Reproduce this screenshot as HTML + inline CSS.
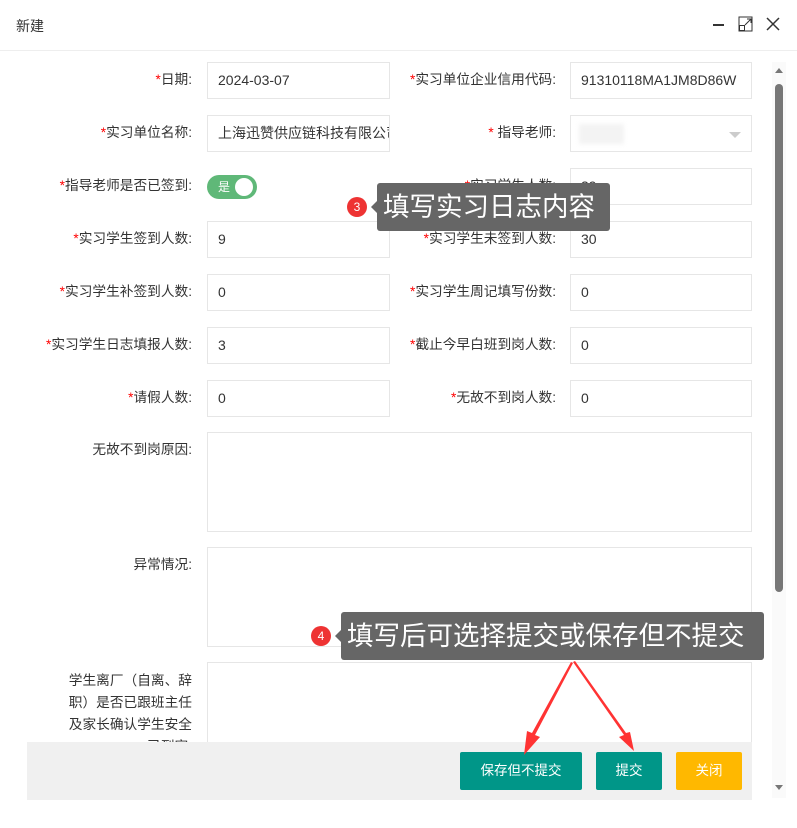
<!DOCTYPE html>
<html><head><meta charset="utf-8"><style>
*{box-sizing:border-box;margin:0;padding:0}
body{width:797px;height:828px;background:#fff;font-family:"Liberation Sans","Noto Sans CJK SC",sans-serif;font-size:13px;color:#333;position:relative;overflow:hidden}
.a{position:absolute}
.lab{position:absolute;text-align:right;line-height:36px;color:#333;font-size:13.7px;white-space:nowrap}
.lab i{color:#f00;font-style:normal}
.in{position:absolute;border:1px solid #e6e6e6;height:37px;line-height:35px;padding-left:10px;font-size:14px;color:#333;overflow:hidden;white-space:nowrap;background:#fff}
.btn{position:absolute;top:752px;height:38px;line-height:38px;color:#fff;text-align:center;border-radius:2px;font-size:13.5px}
.tip{position:absolute;background:#666;color:#fff;font-size:26.5px;border-radius:3px;padding-left:6px;white-space:nowrap;overflow:hidden}
.bd{position:absolute;width:20px;height:20px;border-radius:50%;background:#e33;color:#fff;font-size:12px;text-align:center;line-height:20px}
</style></head><body>
<div class="a" style="left:16px;top:16px;font-size:14px">新建</div>
<div class="a" style="left:713px;top:24px;width:11px;height:2px;background:#333"></div>
<svg class="a" style="left:738px;top:16px" width="16" height="16"><rect x="1" y="1" width="13" height="14" fill="none" stroke="#333"/><path d="M7 9 L13 3 M9 3 H13 V7" stroke="#333" fill="none"/><rect x="1.5" y="9.5" width="5" height="5" fill="#fff" stroke="#333"/></svg>
<svg class="a" style="left:766px;top:17px" width="14" height="14"><path d="M1 1 L13 13 M13 1 L1 13" stroke="#333" stroke-width="1.5"/></svg>
<div class="a" style="left:0;top:50px;width:797px;height:1px;background:#eee"></div>

<div class="lab" style="right:605px;top:62px"><i>*</i>日期:</div>
<div class="in" style="left:207px;width:183px;top:62px">2024-03-07</div>
<div class="lab" style="right:241px;top:62px"><i>*</i>实习单位企业信用代码:</div>
<div class="in" style="left:570px;width:182px;top:62px">91310118MA1JM8D86W</div>

<div class="lab" style="right:605px;top:115px"><i>*</i>实习单位名称:</div>
<div class="in" style="left:207px;width:183px;top:115px">上海迅赞供应链科技有限公司</div>
<div class="lab" style="right:241px;top:115px"><i>*</i> 指导老师:</div>
<div class="in" style="left:570px;width:182px;top:115px"><span class="a" style="left:8px;top:8px;width:45px;height:20px;background:#f3f3f3;filter:blur(2px)"></span><span class="a" style="right:10px;top:16px;border:6px solid transparent;border-top-color:#ccc;border-bottom:0"></span></div>

<div class="lab" style="right:605px;top:168px"><i>*</i>指导老师是否已签到:</div>
<div class="a" style="left:207px;top:175px;width:50px;height:24px;border-radius:12px;background:#5fb878;color:#fff;font-size:12px;line-height:24px;padding-left:11px">是<span class="a" style="right:4px;top:3px;width:18px;height:18px;border-radius:50%;background:#fff"></span></div>
<div class="lab" style="right:241px;top:168px"><i>*</i>实习学生人数:</div>
<div class="in" style="left:570px;width:182px;top:168px">39</div>

<div class="lab" style="right:605px;top:221px"><i>*</i>实习学生签到人数:</div>
<div class="in" style="left:207px;width:183px;top:221px">9</div>
<div class="lab" style="right:241px;top:221px"><i>*</i>实习学生未签到人数:</div>
<div class="in" style="left:570px;width:182px;top:221px">30</div>

<div class="lab" style="right:605px;top:274px"><i>*</i>实习学生补签到人数:</div>
<div class="in" style="left:207px;width:183px;top:274px">0</div>
<div class="lab" style="right:241px;top:274px"><i>*</i>实习学生周记填写份数:</div>
<div class="in" style="left:570px;width:182px;top:274px">0</div>

<div class="lab" style="right:605px;top:327px"><i>*</i>实习学生日志填报人数:</div>
<div class="in" style="left:207px;width:183px;top:327px">3</div>
<div class="lab" style="right:241px;top:327px"><i>*</i>截止今早白班到岗人数:</div>
<div class="in" style="left:570px;width:182px;top:327px">0</div>

<div class="lab" style="right:605px;top:380px"><i>*</i>请假人数:</div>
<div class="in" style="left:207px;width:183px;top:380px">0</div>
<div class="lab" style="right:241px;top:380px"><i>*</i>无故不到岗人数:</div>
<div class="in" style="left:570px;width:182px;top:380px">0</div>

<div class="lab" style="right:605px;top:432px">无故不到岗原因:</div>
<div class="in" style="left:207px;width:545px;top:432px;height:100px"></div>
<div class="lab" style="right:605px;top:547px">异常情况:</div>
<div class="in" style="left:207px;width:545px;top:547px;height:100px"></div>
<div class="a" style="left:58px;width:134px;top:670px;text-align:right;line-height:22px;font-size:13.7px">学生离厂（自离、辞职）是否已跟班主任及家长确认学生安全已到家:</div>
<div class="in" style="left:207px;width:545px;top:662px;height:100px"></div>

<div class="a" style="left:27px;top:742px;width:725px;height:58px;background:#f0f0f0"></div>
<div class="a" style="left:0;top:800px;width:797px;height:28px;background:#fff"></div>
<div class="btn" style="left:460px;width:122px;background:#009688">保存但不提交</div>
<div class="btn" style="left:596px;width:66px;background:#009688">提交</div>
<div class="btn" style="left:676px;width:66px;background:#ffb800">关闭</div>

<div class="a" style="left:772px;top:62px;width:14px;height:736px;background:#fafafa"></div>
<div class="a" style="left:775px;top:84px;width:8px;height:508px;background:#777;border-radius:4px"></div>
<div class="a" style="left:775px;top:68px;border:4px solid transparent;border-bottom:5px solid #777;border-top:0"></div>
<div class="a" style="left:775px;top:785px;border:4px solid transparent;border-top:5px solid #777;border-bottom:0"></div>

<div class="bd" style="left:347px;top:197px">3</div>
<div class="a" style="left:371px;top:201px;border:6px solid transparent;border-right-color:#666;border-left:0"></div>
<div class="tip" style="left:377px;top:183px;width:233px;height:48px;line-height:48px">填写实习日志内容</div>
<div class="bd" style="left:311px;top:626px">4</div>
<div class="a" style="left:335px;top:630px;border:6px solid transparent;border-right-color:#666;border-left:0"></div>
<div class="tip" style="left:341px;top:612px;width:423px;height:48px;line-height:48px">填写后可选择提交或保存但不提交</div>

<svg class="a" style="left:0;top:0" width="797" height="828">
<polygon points="571,662 532,733 527,731 524,755 540,737 535,735 573,663" fill="#f33"/>
<polygon points="573,662 624,735 619,737 634,751 630,732 626,733 575,661" fill="#f33"/>
</svg>
</body></html>
